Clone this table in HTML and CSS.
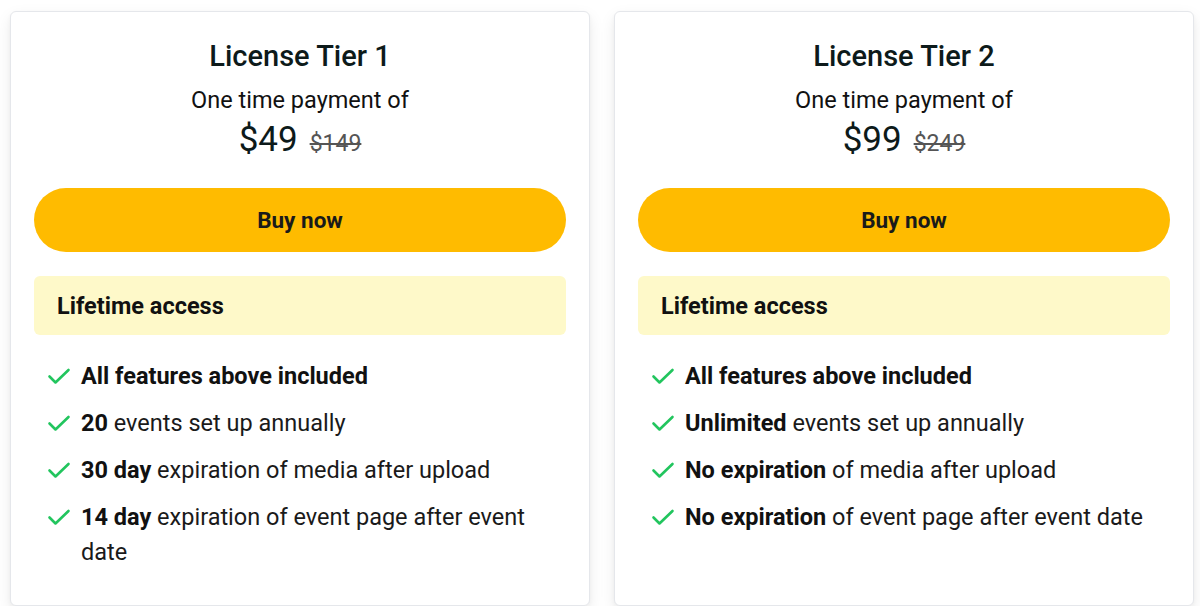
FILE: index.html
```html
<!DOCTYPE html>
<html>
<head>
<meta charset="utf-8">
<link rel="stylesheet" href="styles.css">
</head>
<body>
<div class="plans">
  <div class="card">
    <h2 class="title">License Tier 1</h2>
    <p class="sub">One time payment of</p>
    <div class="price"><span class="now">$49</span><span class="was">$149</span></div>
    <button class="buy">Buy now</button>
    <div class="access">Lifetime access</div>
    <ul class="features">
      <li><svg class="check" viewBox="0 0 26 26"><path d="M3.5 13.5l6 6L22.5 7"/></svg><span><b>All features above included</b></span></li>
      <li><svg class="check" viewBox="0 0 26 26"><path d="M3.5 13.5l6 6L22.5 7"/></svg><span><b>20</b> events set up annually</span></li>
      <li><svg class="check" viewBox="0 0 26 26"><path d="M3.5 13.5l6 6L22.5 7"/></svg><span><b>30 day</b> expiration of media after upload</span></li>
      <li><svg class="check" viewBox="0 0 26 26"><path d="M3.5 13.5l6 6L22.5 7"/></svg><span><b>14 day</b> expiration of event page after event date</span></li>
    </ul>
  </div>
  <div class="card">
    <h2 class="title">License Tier 2</h2>
    <p class="sub">One time payment of</p>
    <div class="price"><span class="now">$99</span><span class="was">$249</span></div>
    <button class="buy">Buy now</button>
    <div class="access">Lifetime access</div>
    <ul class="features">
      <li><svg class="check" viewBox="0 0 26 26"><path d="M3.5 13.5l6 6L22.5 7"/></svg><span><b>All features above included</b></span></li>
      <li><svg class="check" viewBox="0 0 26 26"><path d="M3.5 13.5l6 6L22.5 7"/></svg><span><b>Unlimited</b> events set up annually</span></li>
      <li><svg class="check" viewBox="0 0 26 26"><path d="M3.5 13.5l6 6L22.5 7"/></svg><span><b>No expiration</b> of media after upload</span></li>
      <li><svg class="check" viewBox="0 0 26 26"><path d="M3.5 13.5l6 6L22.5 7"/></svg><span><b>No expiration</b> of event page after event date</span></li>
    </ul>
  </div>
</div>
</body>
</html>
```

FILE: styles.css
```css
* { box-sizing: border-box; }
html, body { margin: 0; padding: 0; background: #fff; }
body {
  font-family: Roboto, "Liberation Sans", Arial, sans-serif;
  color: #111;
}
.plans {
  display: flex;
  gap: 24px;
  padding: 11px 0 0 10px;
  align-items: stretch;
}
.card {
  width: 580px;
  height: 595px;
  background: #fff;
  border: 1px solid #e5e7eb;
  border-radius: 6px;
  box-shadow: 0 6px 16px rgba(0,0,0,0.08), 0 2px 4px rgba(0,0,0,0.04);
  padding: 25px 23px;
  display: flex;
  flex-direction: column;
}
.title {
  margin: 0;
  text-align: center;
  font-size: 29px;
  font-weight: 500;
  line-height: 38px;
  color: #0d1a1a;
}
.sub {
  margin: 11px 0 0;
  text-align: center;
  font-size: 23.5px;
  line-height: 28px;
  color: #111;
}
.price {
  display: flex;
  justify-content: center;
  align-items: baseline;
  gap: 12px;
  margin-top: 4px;
  line-height: 44px;
}
.now {
  font-size: 35px;
  font-weight: 400;
  color: #0d1a1a;
}
.was {
  font-size: 23px;
  color: #555;
  text-decoration: line-through;
}
.buy {
  margin-top: 22px;
  height: 64px;
  flex: none;
  border: none;
  border-radius: 32px;
  background: #ffbb00;
  font-family: inherit;
  font-size: 22.5px;
  font-weight: 700;
  color: #1a1a1a;
  cursor: pointer;
}
.access {
  margin-top: 24px;
  background: #fef9c9;
  border-radius: 6px;
  height: 59px;
  flex: none;
  padding: 0 23px;
  display: flex;
  align-items: center;
  font-size: 23.5px;
  font-weight: 700;
  color: #111;
}
.features {
  list-style: none;
  margin: 24px 0 0;
  padding: 0 0 0 12px;
  display: flex;
  flex-direction: column;
  gap: 12px;
}
.features li {
  display: flex;
  align-items: flex-start;
  gap: 9px;
  font-size: 23.5px;
  line-height: 35px;
  color: #1a1a1a;
}
.features b { font-weight: 700; color: #111; }
.check {
  flex: none;
  width: 26px;
  height: 26px;
  margin-top: 4px;
  fill: none;
  stroke: #22c55e;
  stroke-width: 2.6;
  stroke-linecap: round;
  stroke-linejoin: round;
}
```
